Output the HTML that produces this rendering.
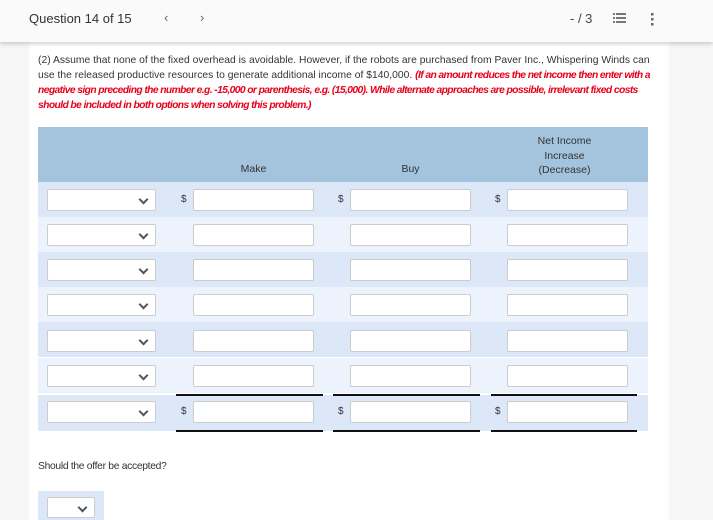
<!DOCTYPE html>
<html><head><style>
*{box-sizing:border-box;margin:0;padding:0}
body{width:713px;height:520px;overflow:hidden;background:#f6f6f6;font-family:"Liberation Sans",sans-serif;color:#333;position:relative}
.hdr{position:absolute;left:0;top:0;width:713px;height:42px;background:#fafafa;box-shadow:0 2px 4px rgba(0,0,0,.18);z-index:2}
.card{position:absolute;left:29px;top:42px;width:640px;height:478px;background:#fff}
.abs{position:absolute}
.q{left:38px;top:53px;font-size:10.3px;line-height:15px;letter-spacing:.02px;color:#333;white-space:nowrap}
.q i{color:#e8001c;font-weight:bold;letter-spacing:-.6px}
.row{position:absolute;left:38px;width:610px;height:35px}
.sel{position:absolute;width:109px;height:22px;border:1px solid #ccc;background:#fff;border-radius:2px}
.sel:after{content:"";position:absolute;right:8px;top:6px;width:5px;height:5px;border-right:2px solid #555;border-bottom:2px solid #555;transform:rotate(45deg)}
.inp{position:absolute;width:121px;height:22px;border:1px solid #ccc;background:#fff;border-radius:2px}
.d{position:absolute;font-size:10px;color:#333}
.ln{position:absolute;height:2px;background:#111}
</style></head><body>
<div class="hdr">
<div class="abs" style="left:29px;top:11px;font-size:13px;color:#333">Question 14 of 15</div>
<div class="abs" style="left:164px;top:10px;font-size:13px;color:#666">&lsaquo;</div>
<div class="abs" style="left:200px;top:10px;font-size:13px;color:#666">&rsaquo;</div>
<div class="abs" style="left:570px;top:11px;font-size:13px;color:#444">- / 3</div>
<svg class="abs" style="left:613px;top:12px" width="14" height="14"><g fill="#777"><rect x="0" y="1" width="2" height="2"/><rect x="0" y="5" width="2" height="2"/><rect x="0" y="9" width="2" height="2"/><rect x="3" y="1" width="10" height="2"/><rect x="3" y="5" width="10" height="2"/><rect x="3" y="9" width="10" height="2"/></g></svg>
<svg class="abs" style="left:651px;top:12px" width="4" height="14"><g fill="#666"><rect x="0" y="1" width="2.5" height="2.5"/><rect x="0" y="6" width="2.5" height="2.5"/><rect x="0" y="11" width="2.5" height="2.5"/></g></svg>
</div>
<div class="card"></div>
<div class="abs q">(2) Assume that none of the fixed overhead is avoidable. However, if the robots are purchased from Paver Inc., Whispering Winds can<br>use the released productive resources to generate additional income of $140,000. <i>(If an amount reduces the net income then enter with a</i><br><i>negative sign preceding the number e.g. -15,000 or parenthesis, e.g. (15,000). While alternate approaches are possible, irrelevant fixed costs</i><br><i>should be included in both options when solving this problem.)</i></div>
<div class="abs" style="left:38px;top:127px;width:610px;height:55px;background:#a4c3dd"></div>
<div class="abs" style="left:193px;top:163px;width:121px;text-align:center;font-size:10.5px">Make</div>
<div class="abs" style="left:350px;top:163px;width:121px;text-align:center;font-size:10.5px">Buy</div>
<div class="abs" style="left:504px;top:134px;width:121px;text-align:center;font-size:10.5px;line-height:14.5px">Net Income<br>Increase<br>(Decrease)</div>

<div class="row" style="top:182px;background:#dce7f7"></div>
<div class="row" style="top:217px;background:#edf3fd"></div>
<div class="row" style="top:252px;background:#dce7f7"></div>
<div class="row" style="top:287px;background:#edf3fd"></div>
<div class="row" style="top:322px;background:#dce7f7"></div>
<div class="row" style="top:358px;background:#edf3fd"></div>
<div class="row" style="top:395px;height:36px;background:#dce7f7"></div>

<div id="rows"></div>
<script>
var tops=[189,224,259,294,330,365,401],h='';
tops.forEach(function(t,i){
h+='<div class="sel" style="left:47px;top:'+t+'px"></div>';
[193,350,507].forEach(function(x){h+='<div class="inp" style="left:'+x+'px;top:'+t+'px"></div>';});
if(i==0||i==6){[181,338,495].forEach(function(x){h+='<div class="d" style="left:'+x+'px;top:'+(t+5)+'px">$</div>';});}
});
[[176,147],[333,147],[491,146]].forEach(function(a){h+='<div class="ln" style="left:'+a[0]+'px;width:'+a[1]+'px;top:394px"></div><div class="ln" style="left:'+a[0]+'px;width:'+a[1]+'px;top:430px"></div>';});
document.getElementById('rows').innerHTML=h;
</script>
<div class="abs" style="left:38px;top:461px;font-size:10.3px;letter-spacing:-.3px">Should the offer be accepted?</div>
<div class="abs" style="left:38px;top:491px;width:66px;height:29px;background:#dce7f7"></div>
<div class="sel" style="left:47px;top:497px;width:48px;height:21px"></div>
</body></html>
